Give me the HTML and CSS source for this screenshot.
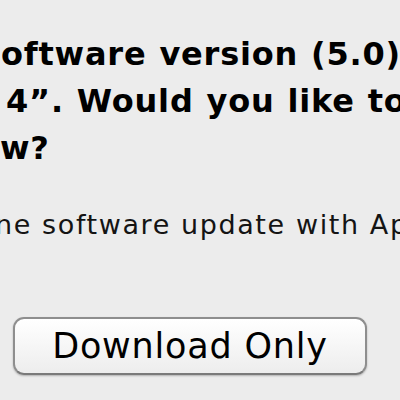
FILE: index.html
```html
<!DOCTYPE html>
<html>
<head>
<meta charset="utf-8">
<link rel="stylesheet" href="styles.css">
</head>
<body>
<div class="dialog">
  <div class="message">
    <div class="line l1">oftware version (5.0)</div>
    <div class="line l2">4”. Would you like to</div>
    <div class="line l3">w?</div>
  </div>
  <div class="info">ne software update with Ap</div>
  <div class="buttons">
    <button class="btn">Download Only</button>
  </div>
</div>
</body>
</html>
```
FILE: styles.css
```css
html, body {
  margin: 0;
  padding: 0;
  background: #ececec;
  width: 400px;
  height: 400px;
  overflow: hidden;
}
.dialog {
  display: flex;
  flex-direction: column;
  font-family: "DejaVu Sans", sans-serif;
  color: #000;
}
.message {
  padding-top: 31px;
  font-weight: bold;
  font-size: 32px;
  line-height: 47px;
  letter-spacing: 0.8px;
  word-spacing: 1px;
}
.line {
  white-space: nowrap;
}
.l1 { padding-left: 1px; }
.l2 { padding-left: 6px; }
.l3 { padding-left: 0; }
.info {
  margin-top: 37px;
  font-size: 27px;
  line-height: 32px;
  letter-spacing: 1.6px;
  white-space: nowrap;
  text-indent: -5px;
  color: #141414;
}
.buttons {
  display: flex;
  padding-top: 76px;
  padding-left: 13px;
}
.btn {
  width: 354px;
  height: 58px;
  box-sizing: border-box;
  border: 2px solid #8e8e8e;
  border-bottom-color: #7a7a7a;
  border-radius: 11px;
  background: linear-gradient(#ffffff, #f6f6f6 50%, #ededed);
  box-shadow: 0 1px 2px rgba(0,0,0,0.25);
  font-family: "DejaVu Sans", sans-serif;
  font-size: 35px;
  letter-spacing: 0.8px;
  color: #000;
  padding: 0;
}
```
